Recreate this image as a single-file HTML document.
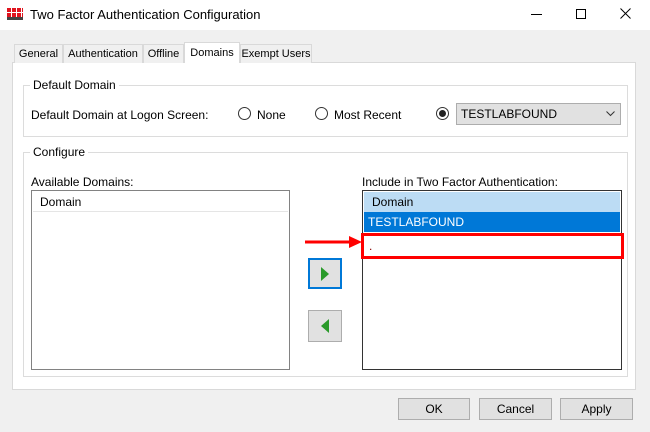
<html><head><style>
body{margin:0;width:650px;height:432px;background:#f0f0f0;font-family:"Liberation Sans",sans-serif;font-size:12px;color:#000;position:relative;overflow:hidden}
div,span{position:absolute;box-sizing:border-box}
.tab{top:44px;height:19px;border:1px solid #d9d9d9;border-bottom:none;background:#f0f0f0;padding:3px 0 0;white-space:nowrap;font-size:11px;text-align:center;overflow:hidden}
.gb{border:1px solid #dcdcdc}
.gl{background:#fff;padding:0 3px;top:-8px;left:6px}
.rad{width:13px;height:13px;border:1px solid #333;border-radius:50%;background:#fff}
.btn{background:#e1e1e1;border:1px solid #adadad;text-align:center;line-height:20px}
</style></head><body>
<div style="left:0;top:0;width:650px;height:30px;background:#fff"></div>
<div style="left:7px;top:8px;width:16px;height:9px;background:repeating-linear-gradient(90deg,#e0141e 0 4px,#fff 4px 5px)"></div>
<div style="left:7px;top:12px;width:16px;height:1px;background:#fff"></div>
<div style="left:7px;top:17px;width:16px;height:3px;background:#444"></div>
<span style="left:30px;top:7px;font-size:13px">Two Factor Authentication Configuration</span>
<div style="left:531px;top:14px;width:11px;height:1px;background:#000"></div>
<div style="left:576px;top:9px;width:10px;height:10px;border:1px solid #000"></div>
<svg style="position:absolute;left:620px;top:8px" width="11" height="11"><path d="M0.5 0.5L10.5 10.5M10.5 0.5L0.5 10.5" stroke="#000"/></svg>
<div style="left:12px;top:62px;width:624px;height:328px;background:#fff;border:1px solid #d9d9d9"></div>
<div class="tab" style="left:14px;width:49px">General</div>
<div class="tab" style="left:63px;width:80px">Authentication</div>
<div class="tab" style="left:143px;width:41px">Offline</div>
<div class="tab" style="left:184px;top:42px;height:21px;width:56px;background:#fff;padding-top:4px">Domains</div>
<div class="tab" style="left:240px;width:72px">Exempt Users</div>
<div class="gb" style="left:23px;top:85px;width:605px;height:52px"><span class="gl">Default Domain</span></div>
<span style="left:31px;top:108px">Default Domain at Logon Screen:</span>
<div class="rad" style="left:238px;top:107px"></div><span style="left:257px;top:108px">None</span>
<div class="rad" style="left:315px;top:107px"></div><span style="left:334px;top:108px">Most Recent</span>
<div class="rad" style="left:436px;top:107px"><div style="left:2px;top:2px;width:7px;height:7px;border-radius:50%;background:#222"></div></div>
<div style="left:456px;top:103px;width:165px;height:22px;background:#e1e1e1;border:1px solid #adadad;padding:3px 4px">TESTLABFOUND</div>
<svg style="position:absolute;left:606px;top:111px" width="10" height="6"><path d="M0.5 0.5L4.5 4.5L8.5 0.5" stroke="#333" fill="none"/></svg>
<div class="gb" style="left:23px;top:152px;width:605px;height:225px"><span class="gl">Configure</span></div>
<span style="left:31px;top:175px">Available Domains:</span>
<span style="left:362px;top:175px">Include in Two Factor Authentication:</span>
<div style="left:31px;top:190px;width:259px;height:180px;border:1px solid #828282;background:#fff"></div>
<div style="left:33px;top:192px;width:255px;height:20px;border-bottom:1px solid #e5e5e5;padding:3px 7px">Domain</div>
<div style="left:362px;top:190px;width:260px;height:180px;border:1px solid #333;background:#fff"></div>
<div style="left:364px;top:192px;width:256px;height:20px;background:#bcdcf4;padding:3px 8px">Domain</div>
<div style="left:364px;top:212px;width:256px;height:20px;background:#0078d7;color:#fff;padding:3px 4px">TESTLABFOUND</div>
<div style="left:361px;top:233px;width:263px;height:26px;border:3px solid #f00;padding:3px 5px;color:#800">.</div>
<svg style="position:absolute;left:305px;top:235px" width="58" height="14"><path d="M0 7H46" stroke="#f00" stroke-width="3"/><path d="M44 1L57 7L44 13Z" fill="#f00"/></svg>
<div style="left:308px;top:258px;width:34px;height:31px;background:#e1e1e1;border:2px solid #0078d7"></div>
<svg style="position:absolute;left:320px;top:266px" width="10" height="16"><path d="M1 1L9 8L1 15Z" fill="#2a9a2a"/></svg>
<div style="left:308px;top:310px;width:34px;height:32px;background:#e1e1e1;border:1px solid #adadad"></div>
<svg style="position:absolute;left:320px;top:318px" width="10" height="16"><path d="M9 1L1 8L9 15Z" fill="#2a9a2a"/></svg>
<div class="btn" style="left:398px;top:398px;width:72px;height:22px">OK</div>
<div class="btn" style="left:479px;top:398px;width:73px;height:22px">Cancel</div>
<div class="btn" style="left:560px;top:398px;width:73px;height:22px">Apply</div>
</body></html>
